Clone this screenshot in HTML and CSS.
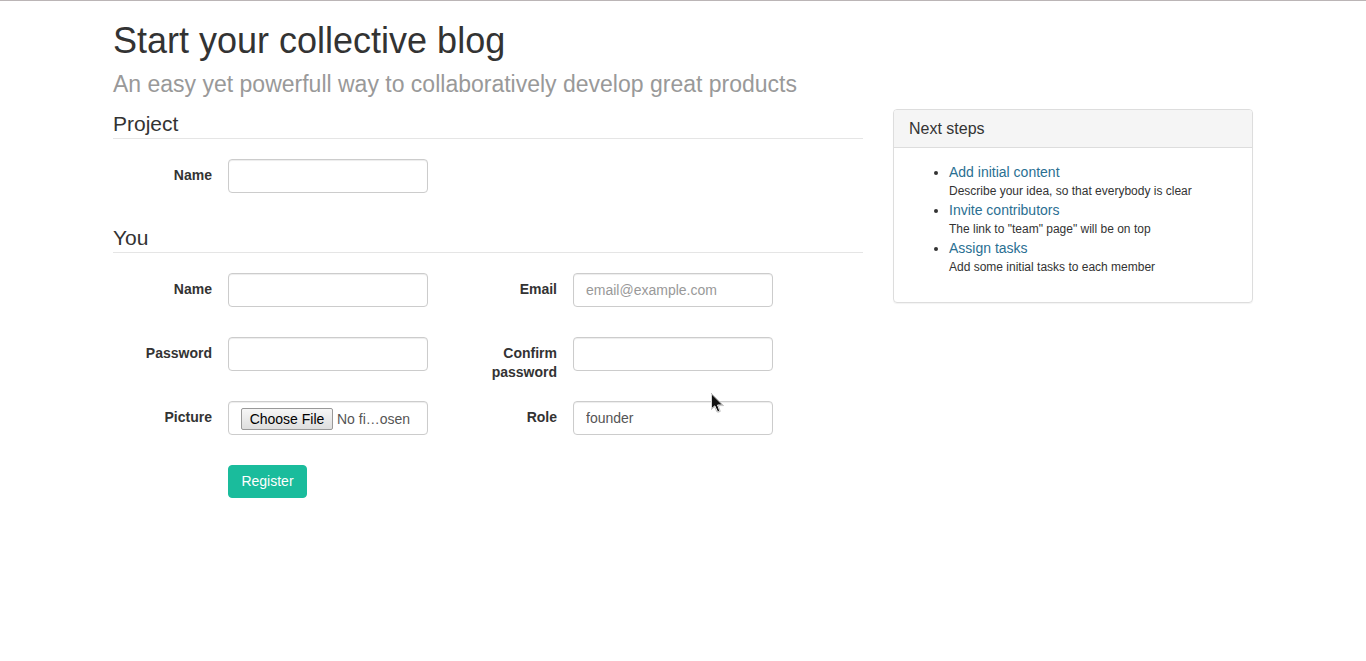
FILE: index.html
```html
<!DOCTYPE html>
<html lang="en">
<head>
<meta charset="utf-8">
<title>Start your collective blog</title>
<link rel="stylesheet" href="styles.css">
</head>
<body>
<div class="container">
  <header class="page-header">
    <h1 class="page-title">Start your collective blog</h1>
    <p class="page-lead">An easy yet powerfull way to collaboratively develop great products</p>
  </header>
  <div class="columns">
    <form class="form">
      <fieldset class="group">
        <legend class="legend">Project</legend>
        <div class="fields">
          <div class="field">
            <label class="label" for="project-name">Name</label>
            <input class="control" id="project-name" type="text">
          </div>
        </div>
      </fieldset>
      <fieldset class="group">
        <legend class="legend">You</legend>
        <div class="fields">
          <div class="field">
            <label class="label" for="user-name">Name</label>
            <input class="control" id="user-name" type="text">
          </div>
          <div class="field">
            <label class="label" for="email">Email</label>
            <input class="control" id="email" type="email" placeholder="email@example.com">
          </div>
          <div class="field">
            <label class="label" for="password">Password</label>
            <input class="control" id="password" type="password">
          </div>
          <div class="field">
            <label class="label" for="confirm">Confirm password</label>
            <input class="control" id="confirm" type="password">
          </div>
          <div class="field">
            <label class="label" for="picture">Picture</label>
            <input class="control control-file" id="picture" type="file">
          </div>
          <div class="field">
            <label class="label" for="role">Role</label>
            <input class="control" id="role" type="text" value="founder">
          </div>
        </div>
      </fieldset>
      <div class="actions">
        <button class="button" type="submit">Register</button>
      </div>
    </form>
    <aside class="panel">
      <h2 class="panel-title">Next steps</h2>
      <ul class="steps">
        <li><a class="step-link" href="#content">Add initial content</a><small class="step-note">Describe your idea, so that everybody is clear</small></li>
        <li><a class="step-link" href="#team">Invite contributors</a><small class="step-note">The link to "team" page" will be on top</small></li>
        <li><a class="step-link" href="#tasks">Assign tasks</a><small class="step-note">Add some initial tasks to each member</small></li>
      </ul>
    </aside>
  </div>
</div>
<svg class="pointer" width="13" height="21" viewBox="0 0 13 21" aria-hidden="true">
  <path d="M.5 .8V15.8L3.8 12.9L6.2 18.2Q7.2 19.2 8.8 18L6.6 12H11.7Z" fill="#111" stroke="#fff" stroke-width="1"/>
  <path d="M.2 .2V16.5L3.6 13.7L5.8 18.8Q7.5 19.7 9.3 18.4L7.3 12.6H12.5Z" fill="none" stroke="#888" stroke-width=".5"/>
</svg>
</body>
</html>
```
FILE: styles.css
```css
*, *::before, *::after {
  box-sizing: border-box;
}

body {
  margin: 0;
  border-top: 1px solid #bbb5b6;
  background: #fff;
  color: #333;
  font-family: "Liberation Sans", Arial, sans-serif;
  font-size: 14px;
  line-height: 19px;
}

.container {
  max-width: 1170px;
  margin: 0 auto;
  padding: 20px 15px;
}

.page-title {
  margin: 0 0 10px;
  font-size: 36px;
  font-weight: 400;
  line-height: 40px;
}

.page-lead {
  margin: 0 0 12px;
  color: #999;
  font-size: 23px;
  line-height: 26px;
}

.columns {
  display: grid;
  grid-template-columns: minmax(0, 25fr) minmax(0, 12fr);
  align-items: start;
  gap: 30px;
}

.group {
  min-width: 0;
  margin: 0 0 19px;
  padding: 0;
  border: 0;
}

.legend {
  display: block;
  width: 100%;
  margin: 0 0 20px;
  padding: 0;
  border-bottom: 1px solid #e5e5e5;
  font-size: 21px;
  line-height: 29px;
}

.fields {
  display: grid;
  grid-template-columns: repeat(auto-fill, 315px);
  grid-auto-rows: minmax(45px, auto);
  gap: 19px 30px;
}

.field {
  display: grid;
  grid-template-columns: 99px 200px;
  align-items: start;
  gap: 16px;
}

.label {
  padding-top: 7px;
  font-weight: 700;
  text-align: right;
}

.control {
  width: 100%;
  height: 34px;
  padding: 6px 12px;
  border: 1px solid #ccc;
  border-radius: 4px;
  background: #fff;
  box-shadow: inset 0 1px 1px rgba(0, 0, 0, 0.075);
  color: #555;
  font: inherit;
}

.control-file {
  padding-right: 15px;
}

.control::placeholder {
  color: #999;
}

.control::file-selector-button {
  width: 92px;
  height: 22px;
  margin: 0 4px 0 0;
  padding: 0 7px;
  border: 1px solid #999;
  border-radius: 2px;
  background: linear-gradient(#f6f6f6, #dedede);
  color: #000;
  font: inherit;
}

.actions {
  padding-left: 115px;
}

.button {
  min-width: 79px;
  padding: 6px 12px;
  border: 1px solid #1abc9c;
  border-radius: 4px;
  background: #1abc9c;
  color: #fff;
  font: inherit;
}

.panel {
  border: 1px solid #ddd;
  border-radius: 4px;
  box-shadow: 0 1px 1px rgba(0, 0, 0, 0.05);
}

.panel-title {
  margin: 0;
  padding: 10px 15px;
  border-bottom: 1px solid #ddd;
  border-radius: 3px 3px 0 0;
  background: #f5f5f5;
  font-size: 16px;
  font-weight: 400;
  line-height: 17px;
}

.steps {
  margin: 0;
  padding: 15px 15px 25px 55px;
}

.step-link {
  color: #2a6f92;
  text-decoration: none;
}

.step-note {
  display: block;
  font-size: 12px;
}

.pointer {
  position: absolute;
  top: 393px;
  left: 711px;
  pointer-events: none;
}
```
